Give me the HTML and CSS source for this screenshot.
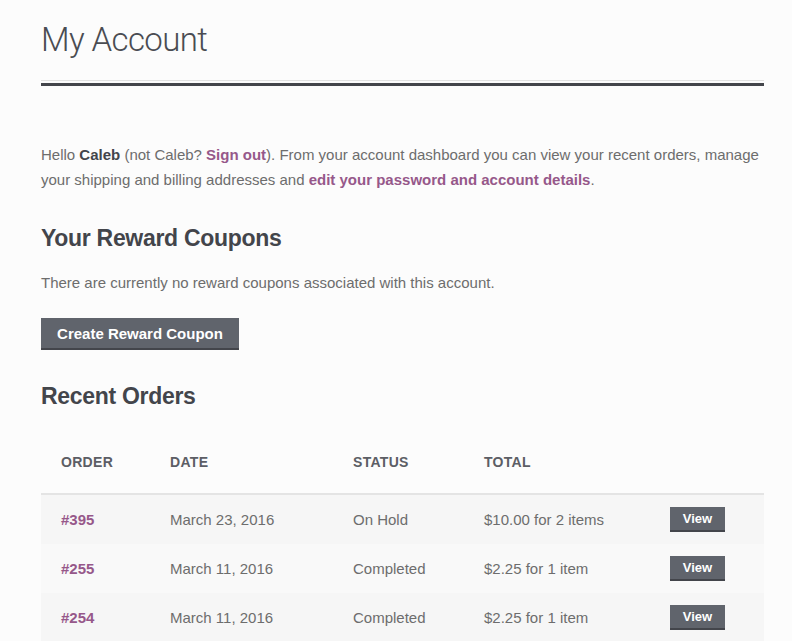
FILE: index.html
```html
<!DOCTYPE html>
<html lang="en">
<head>
<meta charset="utf-8">
<title>My Account</title>
<link rel="stylesheet" href="styles.css">
</head>
<body>
<main class="page">
  <header class="page-header">
    <h1 class="page-title">My Account</h1>
  </header>
  <div class="entry">
    <p class="intro">Hello <strong>Caleb</strong> (not Caleb? <a href="#">Sign out</a>). From your account dashboard you can view your recent orders, manage your shipping and billing addresses and <a href="#">edit your password and account details</a>.</p>

    <h2 class="section-title">Your Reward Coupons</h2>
    <p class="note">There are currently no reward coupons associated with this account.</p>
    <button class="btn btn-large" type="button">Create Reward Coupon</button>

    <h2 class="section-title orders-title">Recent Orders</h2>
    <table class="orders">
      <thead>
        <tr>
          <th class="c-order">Order</th>
          <th class="c-date">Date</th>
          <th class="c-status">Status</th>
          <th class="c-total">Total</th>
          <th class="c-action"></th>
        </tr>
      </thead>
      <tbody>
        <tr>
          <td class="c-order"><a href="#">#395</a></td>
          <td>March 23, 2016</td>
          <td>On Hold</td>
          <td>$10.00 for 2 items</td>
          <td><button class="btn btn-small" type="button">View</button></td>
        </tr>
        <tr>
          <td class="c-order"><a href="#">#255</a></td>
          <td>March 11, 2016</td>
          <td>Completed</td>
          <td>$2.25 for 1 item</td>
          <td><button class="btn btn-small" type="button">View</button></td>
        </tr>
        <tr>
          <td class="c-order"><a href="#">#254</a></td>
          <td>March 11, 2016</td>
          <td>Completed</td>
          <td>$2.25 for 1 item</td>
          <td><button class="btn btn-small" type="button">View</button></td>
        </tr>
      </tbody>
    </table>
  </div>
</main>
</body>
</html>
```
FILE: styles.css
```css
html, body {
  margin: 0;
  padding: 0;
  background: #fcfcfc;
}
body {
  font-family: "Liberation Sans", Arial, sans-serif;
  color: #6d6d6d;
  font-size: 15px;
  line-height: 25px;
}
.page {
  width: 723px;
  margin-left: 41px;
}
.page-header {
  padding-bottom: 2px;
  border-bottom: 3px solid #43454b;
}
.page-title {
  margin: 0;
  padding: 16px 0 16px;
  border-bottom: 1px solid #e2e2e2;
  font-family: Roboto, "Liberation Sans", sans-serif;
  font-weight: 300;
  font-size: 33px;
  line-height: 48px;
  color: #4a4c52;
  letter-spacing: -0.6px;
}
.entry {
  padding-top: 56px;
}
.intro {
  margin: 0;
}
.intro strong {
  color: #43454b;
  font-weight: 700;
}
a {
  color: #96588a;
  font-weight: 700;
  text-decoration: none;
}
.section-title {
  margin: 31px 0 0;
  font-size: 23px;
  line-height: 30px;
  font-weight: 700;
  color: #43454b;
  letter-spacing: -0.3px;
}
.note {
  margin: 17px 0 0;
}
.btn {
  font-family: "Liberation Sans", Arial, sans-serif;
  background: #60646c;
  color: #ffffff;
  border: 0;
  border-bottom: 2px solid #43454b;
  font-weight: 700;
  cursor: pointer;
  display: block;
}
.btn-large {
  margin-top: 23px;
  width: 198px;
  height: 32px;
  font-size: 15px;
  padding: 0;
}
.orders-title {
  margin-top: 31px;
}
.orders {
  margin-top: 21px;
  width: 723px;
  border-collapse: collapse;
}
.orders th {
  text-align: left;
  text-transform: uppercase;
  font-size: 14px;
  letter-spacing: 0.3px;
  font-weight: 700;
  color: #5c5e65;
  height: 61px;
  padding: 0 0 0 20px;
  border-bottom: 2px solid #e4e4e4;
}
.orders td {
  height: 49px;
  padding: 0 0 0 20px;
  vertical-align: middle;
}
.orders tbody tr:nth-child(odd) {
  background: #f6f6f6;
}
.orders tbody tr:nth-child(even) {
  background: #f9f9f9;
}
.orders .c-order { width: 89px; }
.orders .c-date { width: 163px; }
.orders .c-status { width: 111px; }
.orders .c-total { width: 166px; }
.btn-small {
  width: 55px;
  height: 25px;
  font-size: 13px;
  padding: 0;
}
```
